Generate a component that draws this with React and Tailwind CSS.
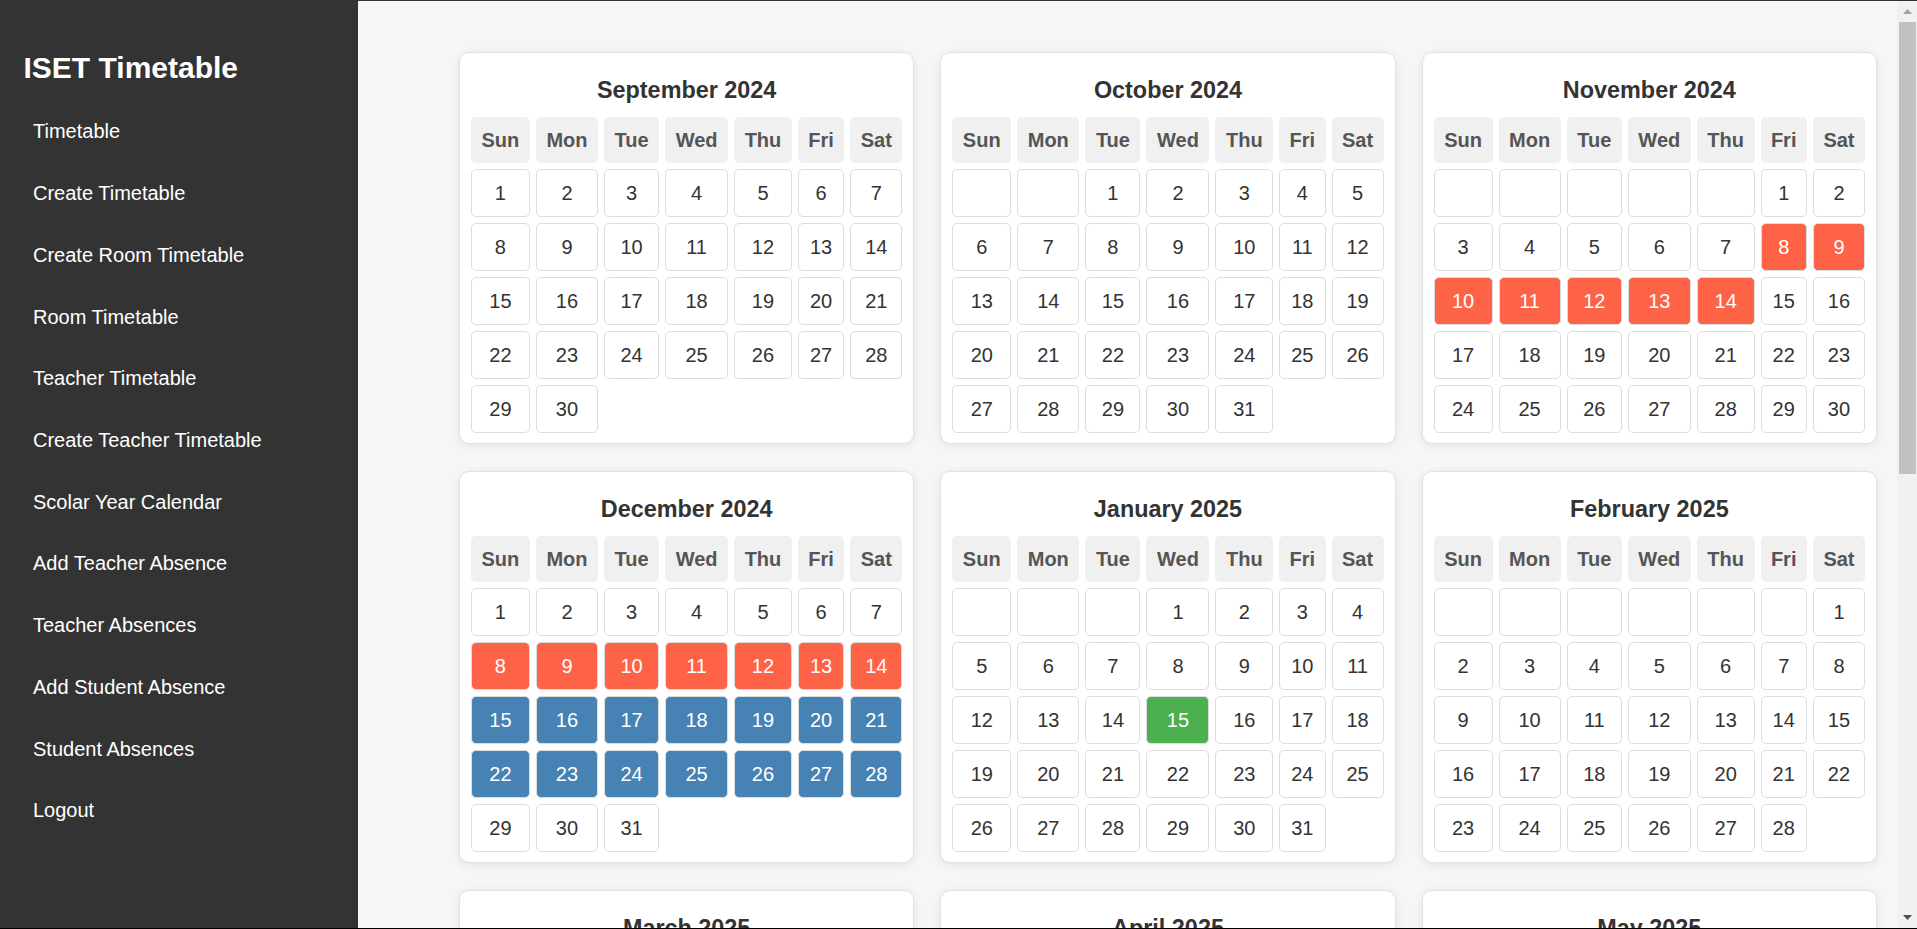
import React from 'react';

const navLinks = [
  'Timetable',
  'Create Timetable',
  'Create Room Timetable',
  'Room Timetable',
  'Teacher Timetable',
  'Create Teacher Timetable',
  'Scolar Year Calendar',
  'Add Teacher Absence',
  'Teacher Absences',
  'Add Student Absence',
  'Student Absences',
  'Logout',
];

const monthNames = [
  'January', 'February', 'March', 'April', 'May', 'June',
  'July', 'August', 'September', 'October', 'November', 'December',
];

const dayNames = ['Sun', 'Mon', 'Tue', 'Wed', 'Thu', 'Fri', 'Sat'];

// school year Sep 2024 -> Aug 2025 (month is 0-indexed)
const months = [
  [2024, 8], [2024, 9], [2024, 10], [2024, 11],
  [2025, 0], [2025, 1], [2025, 2], [2025, 3],
  [2025, 4], [2025, 5], [2025, 6], [2025, 7],
];

const highlights = {};
const mark = (y, m, from, to, kind) => {
  for (let d = from; d <= to; d++) highlights[`${y}-${m}-${d}`] = kind;
};
mark(2024, 10, 8, 14, 'holiday');
mark(2024, 11, 8, 14, 'holiday');
mark(2024, 11, 15, 28, 'vacation');
mark(2025, 0, 15, 15, 'exam');

const cellColors = {
  holiday: 'bg-[#ff6347] text-white',
  vacation: 'bg-[#4682b4] text-white',
  exam: 'bg-[#4caf50] text-white',
};

function buildWeeks(year, month) {
  const first = new Date(year, month, 1).getDay();
  const total = new Date(year, month + 1, 0).getDate();
  const cells = [];
  for (let i = 0; i < first; i++) cells.push(null);
  for (let d = 1; d <= total; d++) cells.push(d);
  const weeks = [];
  for (let i = 0; i < cells.length; i += 7) weeks.push(cells.slice(i, i + 7));
  return weeks;
}

function MonthCard({ year, month }) {
  const weeks = buildWeeks(year, month);
  return (
    <div className="rounded-[10px] border border-[#e2e2e2] bg-white px-[5px] pb-[4px] pt-[24px] shadow-[0_2px_10px_rgba(0,0,0,0.08)]">
      <h3 className="mb-[7px] text-center text-[23.4px] font-bold leading-[27px] text-[#333]">
        {monthNames[month]} {year}
      </h3>
      <table className="w-full border-separate border-spacing-[6.25px]">
        <thead>
          <tr>
            {dayNames.map(name => (
              <th
                key={name}
                className="h-[46px] rounded-[5px] bg-[#f0f0f0] px-[10px] text-center text-[20px] font-bold leading-[23px] text-[#555]"
              >
                {name}
              </th>
            ))}
          </tr>
        </thead>
        <tbody>
          {weeks.map((week, wi) => (
            <tr key={wi}>
              {week.map((day, di) => {
                const kind = day ? highlights[`${year}-${month}-${day}`] : null;
                return (
                  <td
                    key={di}
                    className={`h-[48px] rounded-[5px] border border-[#ddd] px-[10px] text-center text-[20px] leading-[23px] ${kind ? cellColors[kind] : 'bg-white text-[#333]'}`}
                  >
                    {day || ''}
                  </td>
                );
              })}
            </tr>
          ))}
        </tbody>
      </table>
    </div>
  );
}

function ScrollBar() {
  return (
    <div className="flex w-[20px] shrink-0 flex-col bg-[#f1f1f1]">
      <div className="flex h-[21px] items-center justify-center">
        <svg width="9" height="5" viewBox="0 0 9 5">
          <polygon points="0,5 4.5,0 9,5" fill="#a3a3a3" />
        </svg>
      </div>
      <div className="ml-[2px] mr-[1px] h-[452px] bg-[#c1c1c1]" />
      <div className="flex-1" />
      <div className="flex h-[21px] items-center justify-center">
        <svg width="9" height="5" viewBox="0 0 9 5">
          <polygon points="0,0 9,0 4.5,5" fill="#505050" />
        </svg>
      </div>
    </div>
  );
}

export default function App() {
  return (
    <div className="flex h-screen border-t border-b border-t-[#333] border-b-black font-['Liberation_Sans',Arial,sans-serif]">
      {/* Sidebar */}
      <aside className="w-[358px] shrink-0 bg-[#333] pl-[23.5px] pt-[50px] text-white">
        <h2 className="text-[30px] font-bold leading-[34px]">ISET Timetable</h2>
        <nav className="mt-[16px] flex flex-col">
          {navLinks.map(link => (
            <a key={link} className="flex h-[61.73px] cursor-pointer items-center pl-[9.5px] text-[20px] leading-[23px] text-white">
              {link}
            </a>
          ))}
        </nav>
      </aside>

      {/* Calendar grid */}
      <main className="flex-1 overflow-hidden bg-[#f6f6f6] pl-[101px] pr-[20px] pt-[51px]">
        <div className="grid grid-cols-3 gap-x-[26px] gap-y-[27px]">
          {months.map(([y, m]) => (
            <MonthCard key={`${y}-${m}`} year={y} month={m} />
          ))}
        </div>
      </main>

      <ScrollBar />
    </div>
  );
}
